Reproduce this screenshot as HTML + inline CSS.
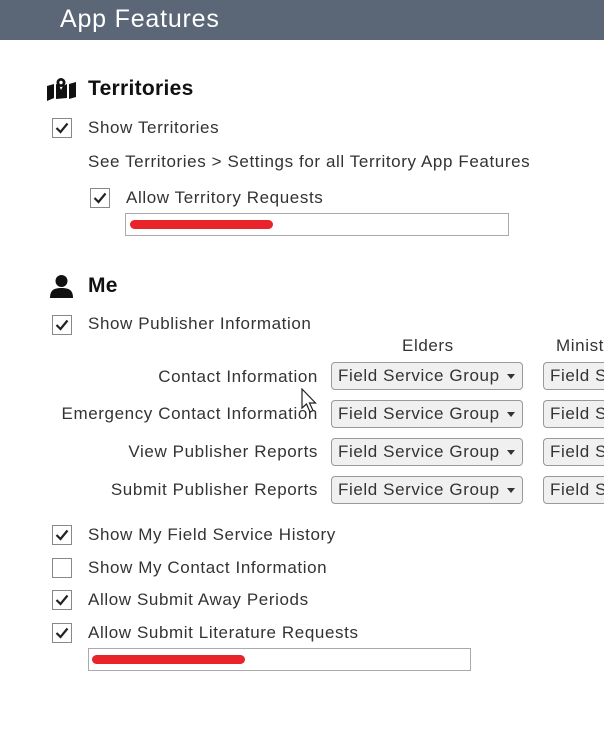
<!DOCTYPE html>
<html><head><style>
html,body{margin:0;width:604px;height:750px;overflow:hidden}
body{background:#fff;position:relative;font-family:"Liberation Sans",sans-serif;color:#333;font-size:17px;letter-spacing:0.6px}
#w{position:absolute;left:0;top:0;width:604px;height:750px;overflow:hidden}
.a{position:absolute;white-space:nowrap}
.t{position:absolute;white-space:nowrap;line-height:20px;transform:translateY(-10px)}
.cb{position:absolute;width:20px;height:20px;border:1px solid #888;background:#fff;box-sizing:border-box}
.cb svg{position:absolute;left:2px;top:2px}
.sel{position:absolute;width:192px;height:28px;border:1px solid #999;border-radius:4px;background:#f0f0f0;box-sizing:border-box;padding-left:6px;line-height:26px;font-size:17px;color:#333;overflow:hidden;white-space:nowrap}
.sel:after{content:"";position:absolute;right:7px;top:11px;border-left:4px solid transparent;border-right:4px solid transparent;border-top:5px solid #333}
.sel.n{width:61px;border-right:none;border-radius:4px 0 0 4px}
.sel.n:after{display:none}
.lbl{position:absolute;right:286px;white-space:nowrap;line-height:20px;transform:translateY(-10px)}
.inp{position:absolute;border:1px solid #aaa;height:23px;box-sizing:border-box;background:#fff}
.red{position:absolute;height:9px;background:#e8232a;border-radius:5px}
</style></head><body><div id="w">
<div class="a" style="left:0;top:0;width:604px;height:40px;background:#5b6677"></div>
<div class="a" style="left:60px;top:4px;color:#fff;font-size:25px;line-height:30px;letter-spacing:0.8px">App Features</div>

<svg class="a" style="left:47px;top:78px" width="29" height="23" viewBox="0 0 29 23"><path d="M0 8 L7 6 L7 20 L0 23Z M9 6 L12 7 L14 12 L16 8 L20 6 L20 20 L9 21Z M22 6 L29 4 L29 19 L22 21Z" fill="#111"/><circle cx="14" cy="4.5" r="4.5" fill="#111"/><circle cx="14" cy="4.5" r="1.7" fill="#fff"/></svg>
<div class="t" style="left:88px;top:89px;font-size:21px;font-weight:bold;color:#111;letter-spacing:0.3px">Territories</div>

<div class="cb" style="left:52px;top:118px"><svg width="14" height="14"><path d="M1.5 7 L5.5 11 L12.5 2.5" stroke="#222" stroke-width="2.2" fill="none"/></svg></div>
<div class="t" style="left:88px;top:128px">Show Territories</div>
<div class="t" style="left:88px;top:162px">See Territories &gt; Settings for all Territory App Features</div>
<div class="cb" style="left:90px;top:188px"><svg width="14" height="14"><path d="M1.5 7 L5.5 11 L12.5 2.5" stroke="#222" stroke-width="2.2" fill="none"/></svg></div>
<div class="t" style="left:126px;top:198px">Allow Territory Requests</div>
<div class="inp" style="left:125px;top:213px;width:384px"></div>
<div class="red" style="left:130px;top:220px;width:143px"></div>

<svg class="a" style="left:50px;top:275px" width="23" height="23" viewBox="0 0 23 23"><circle cx="11.5" cy="6" r="6" fill="#111"/><path d="M0 23 C0 15 4 13 11.5 13 C19 13 23 15 23 23Z" fill="#111"/></svg>
<div class="t" style="left:88px;top:286px;font-size:21px;font-weight:bold;color:#111;letter-spacing:0.3px">Me</div>

<div class="cb" style="left:52px;top:315px"><svg width="14" height="14"><path d="M1.5 7 L5.5 11 L12.5 2.5" stroke="#222" stroke-width="2.2" fill="none"/></svg></div>
<div class="t" style="left:88px;top:324px">Show Publisher Information</div>

<div class="t" style="left:402px;top:346px">Elders</div>
<div class="t" style="left:556px;top:346px">Minist</div>

<div class="lbl" style="top:377px">Contact Information</div>
<div class="lbl" style="top:414px">Emergency Contact Information</div>
<div class="lbl" style="top:452px">View Publisher Reports</div>
<div class="lbl" style="top:490px">Submit Publisher Reports</div>

<div class="sel" style="left:331px;top:362px">Field Service Group</div>
<div class="sel" style="left:331px;top:400px">Field Service Group</div>
<div class="sel" style="left:331px;top:438px">Field Service Group</div>
<div class="sel" style="left:331px;top:476px">Field Service Group</div>
<div class="sel n" style="left:543px;top:362px">Field Se</div>
<div class="sel n" style="left:543px;top:400px">Field Se</div>
<div class="sel n" style="left:543px;top:438px">Field Se</div>
<div class="sel n" style="left:543px;top:476px">Field Se</div>

<svg class="a" style="left:301px;top:388px" width="18" height="26" viewBox="0 0 18 26"><path d="M1 1 L1 20 L5.5 16 L9 24 L12 22.5 L8.5 15 L14.5 15Z" fill="#fff" stroke="#222" stroke-width="1.2"/></svg>

<div class="cb" style="left:52px;top:525px"><svg width="14" height="14"><path d="M1.5 7 L5.5 11 L12.5 2.5" stroke="#222" stroke-width="2.2" fill="none"/></svg></div>
<div class="t" style="left:88px;top:535px">Show My Field Service History</div>
<div class="cb" style="left:52px;top:558px"></div>
<div class="t" style="left:88px;top:568px">Show My Contact Information</div>
<div class="cb" style="left:52px;top:590px"><svg width="14" height="14"><path d="M1.5 7 L5.5 11 L12.5 2.5" stroke="#222" stroke-width="2.2" fill="none"/></svg></div>
<div class="t" style="left:88px;top:600px">Allow Submit Away Periods</div>
<div class="cb" style="left:52px;top:623px"><svg width="14" height="14"><path d="M1.5 7 L5.5 11 L12.5 2.5" stroke="#222" stroke-width="2.2" fill="none"/></svg></div>
<div class="t" style="left:88px;top:633px">Allow Submit Literature Requests</div>
<div class="inp" style="left:88px;top:648px;width:383px"></div>
<div class="red" style="left:92px;top:655px;width:153px"></div>
</div></body></html>
